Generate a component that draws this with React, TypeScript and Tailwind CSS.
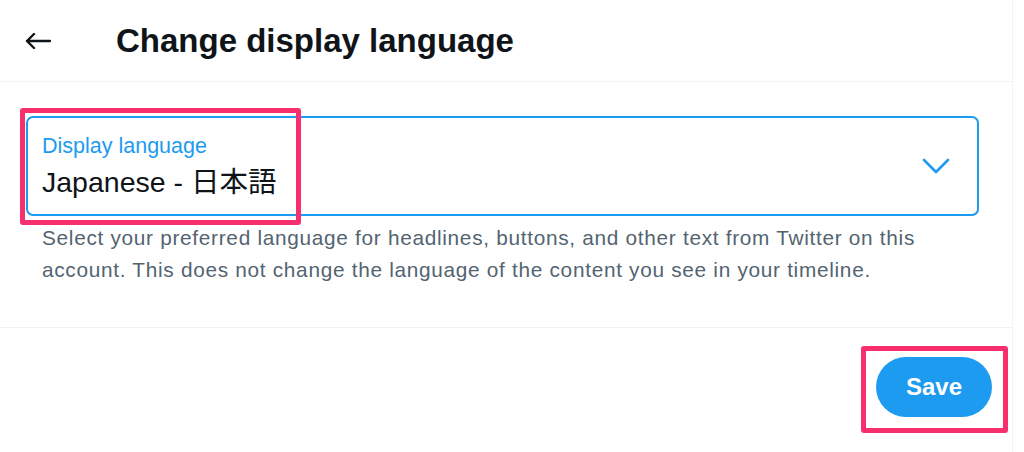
import React from 'react';

const FONT = { fontFamily: '"Liberation Sans", Arial, "Noto Sans CJK JP", sans-serif' };

export default function App() {
  return (
    <div className="relative flex w-[1024px] h-[452px] bg-white overflow-hidden" style={FONT}>
      <div className="flex flex-col w-[1013px] border-r border-[#eff3f4]">
        {/* Header */}
        <div className="flex items-center h-[82px] border-b border-[#eff3f4]">
          <div className="w-[116px] pl-[25px]">
            <svg width="26" height="18" viewBox="0 0 26 18" fill="none" stroke="#0f1419" strokeWidth="2.4" strokeLinecap="round" strokeLinejoin="round">
              <path d="M2 9h23M9 2L2 9l7 7" />
            </svg>
          </div>
          <h1 className="text-[33px] font-bold text-[#0f1419]">Change display language</h1>
        </div>

        {/* Select */}
        <div className="pl-[26px] pr-[33px] pt-[34px] h-[246px] border-b border-[#eff3f4]">
          <div className="flex items-center h-[100px] border-2 border-[#1d9bf0] rounded-[7px] pl-[14px] pr-[27px]">
            <div className="flex-1 flex flex-col">
              <span className="text-[21.5px] leading-[24px] text-[#1d9bf0]">Display language</span>
              <span className="mt-[8px] text-[28.5px] leading-[32px] text-[#0f1419]">Japanese - 日本語</span>
            </div>
            <svg width="28" height="16" viewBox="0 0 28 16" fill="none" stroke="#1d9bf0" strokeWidth="2.6" strokeLinecap="round" strokeLinejoin="round">
              <path d="M2 2l12 12L26 2" />
            </svg>
          </div>
          <p className="mt-[6px] pl-[16px] w-[920px] text-[20.8px] leading-[32px] tracking-[0.7px] text-[#536471]">
            Select your preferred language for headlines, buttons, and other text from Twitter on this account. This does not change the language of the content you see in your timeline.
          </p>
        </div>

        {/* Footer */}
        <div className="flex justify-end pt-[29px] pr-[20px]">
          <button className="w-[116px] h-[60px] rounded-full bg-[#1d9bf0] text-white text-[24px] font-bold">Save</button>
        </div>
      </div>

      {/* Annotation boxes */}
      <div className="absolute left-[20px] top-[108px] w-[281px] h-[117px] border-[5px] border-[#f72f6c] rounded-[3px]" />
      <div className="absolute left-[861px] top-[346px] w-[147px] h-[87px] border-[5px] border-[#f72f6c] rounded-[3px]" />
    </div>
  );
}
